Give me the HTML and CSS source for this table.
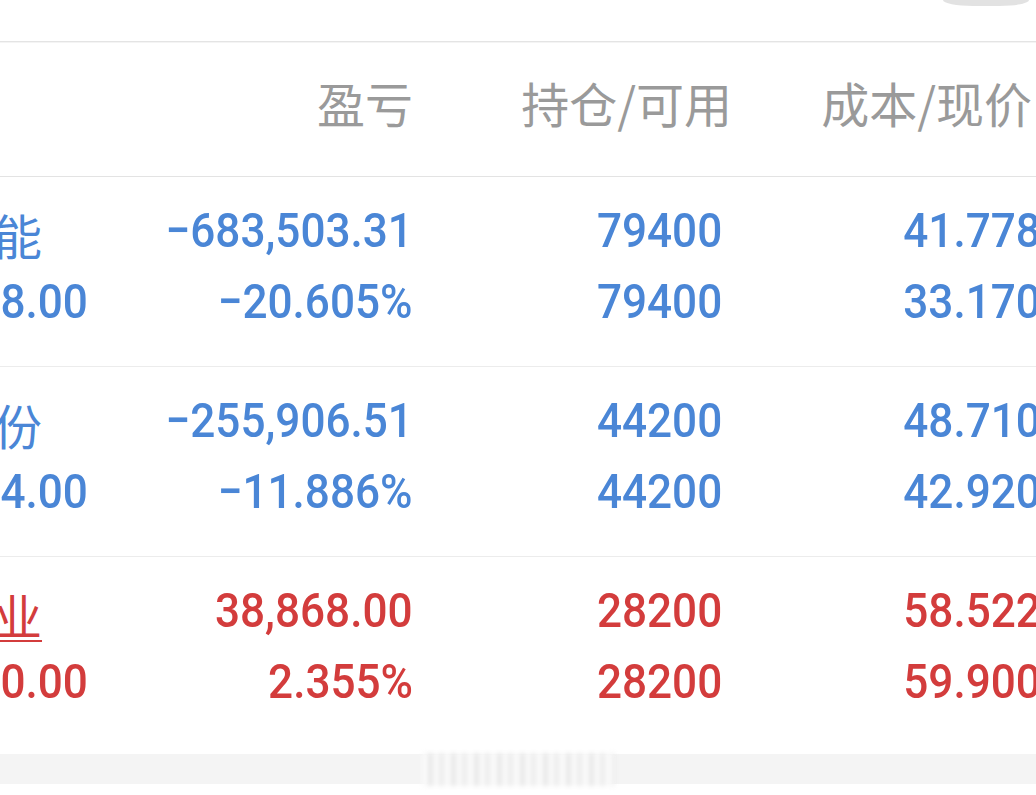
FILE: index.html
```html
<!DOCTYPE html>
<html lang="zh-CN">
<head>
<meta charset="utf-8">
<title>持仓</title>
<link rel="stylesheet" href="styles.css">
</head>
<body>
<div class="screen">
  <div class="topbar"><div class="pill"></div></div>
  <div class="sheet">
    <div class="row head">
      <div class="cell c1"></div>
      <div class="cell c2"><span class="h">盈亏</span></div>
      <div class="cell c3"><span class="h">持仓/可用</span></div>
      <div class="cell c4"><span class="h">成本/现价</span></div>
    </div>
    <div class="row item down">
      <div class="cell c1"><span class="name">隆基绿能</span><span class="num">2633698.00</span></div>
      <div class="cell c2"><span class="num">−683,503.31</span><span class="num">−20.605%</span></div>
      <div class="cell c3"><span class="num">79400</span><span class="num">79400</span></div>
      <div class="cell c4"><span class="num">41.778</span><span class="num">33.170</span></div>
    </div>
    <div class="row item down">
      <div class="cell c1"><span class="name">通威股份</span><span class="num">1897064.00</span></div>
      <div class="cell c2"><span class="num">−255,906.51</span><span class="num">−11.886%</span></div>
      <div class="cell c3"><span class="num">44200</span><span class="num">44200</span></div>
      <div class="cell c4"><span class="num">48.710</span><span class="num">42.920</span></div>
    </div>
    <div class="row item up last">
      <div class="cell c1"><span class="name linked">海天味业</span><span class="num">1689180.00</span></div>
      <div class="cell c2"><span class="num">38,868.00</span><span class="num">2.355%</span></div>
      <div class="cell c3"><span class="num">28200</span><span class="num">28200</span></div>
      <div class="cell c4"><span class="num">58.522</span><span class="num">59.900</span></div>
    </div>
  </div>
  <div class="band"><div class="mark"></div></div>
</div>
</body>
</html>
```
FILE: styles.css
```css
html, body {
  margin: 0;
  padding: 0;
  background: #ffffff;
}
body {
  width: 1036px;
  height: 795px;
  overflow: hidden;
}
.screen {
  width: 1036px;
  height: 795px;
  overflow: hidden;
  background: #ffffff;
}
.topbar {
  height: 41px;
  border-bottom: 1px solid #e4e4e4;
  display: flex;
  justify-content: flex-end;
  align-items: flex-start;
  padding-right: 7px;
}
.pill {
  width: 86px;
  height: 6px;
  background: #e2e2e2;
  border-radius: 0 0 30px 30px / 0 0 6px 6px;
}
.sheet {
  margin-left: -150px;
  width: 1250px;
  border-top: 1px solid #f4f4f4;
}
.row {
  display: grid;
  grid-template-columns: 235px 328px 319px 309px;
}
.head {
  height: 134px;
  border-bottom: 1px solid #e3e3e3;
  align-items: center;
  box-sizing: border-box;
}
.head .cell {
  padding-bottom: 16px;
}
.head .c4 {
  padding-right: 9px;
}
.h {
  font-family: "Noto Sans CJK SC", "Noto Sans", sans-serif;
  font-size: 48px;
  color: #9a9a9a;
  line-height: 1;
  display: block;
}
.item {
  height: 190px;
  box-sizing: border-box;
  border-bottom: 1px solid #ececec;
  padding-top: 18px;
}
.item.last {
  height: 197px;
  border-bottom: none;
}
.cell {
  display: flex;
  flex-direction: column;
}
.c1 { align-items: flex-start; }
.c2, .c3, .c4 { align-items: flex-end; text-align: right; }
.item .c3 { padding-right: 10px; }
.num {
  display: block;
  font-family: Roboto, "Liberation Sans", sans-serif;
  font-weight: 500;
  font-size: 49px;
  line-height: 71px;
  height: 71px;
  white-space: nowrap;
  transform: scaleX(0.9);
  transform-origin: right center;
}
.c1 .num {
  transform-origin: left center;
}
.name {
  display: block;
  box-sizing: border-box;
  font-family: "Noto Sans CJK SC", "Noto Sans", sans-serif;
  font-size: 48px;
  line-height: 63px;
  height: 71px;
  padding-top: 8px;
  white-space: nowrap;
}
.linked {
  text-decoration: underline;
  text-decoration-thickness: 2px;
  text-underline-offset: 5px;
}
.down { color: #4a86d6; }
.up { color: #d33c3c; }
.band {
  height: 30px;
  background: #f4f4f4;
  display: flex;
  justify-content: center;
}
.mark {
  width: 192px;
  height: 33px;
  margin-top: -1px;
  background:
    repeating-linear-gradient(90deg,
      #f7f7f7 0px, #ffffff 5px,
      #dcdcdc 8px, #f4f4f4 11px,
      #ffffff 15px, #e6e6e6 19px, #fafafa 23px);
  filter: blur(2.5px);
}
```
